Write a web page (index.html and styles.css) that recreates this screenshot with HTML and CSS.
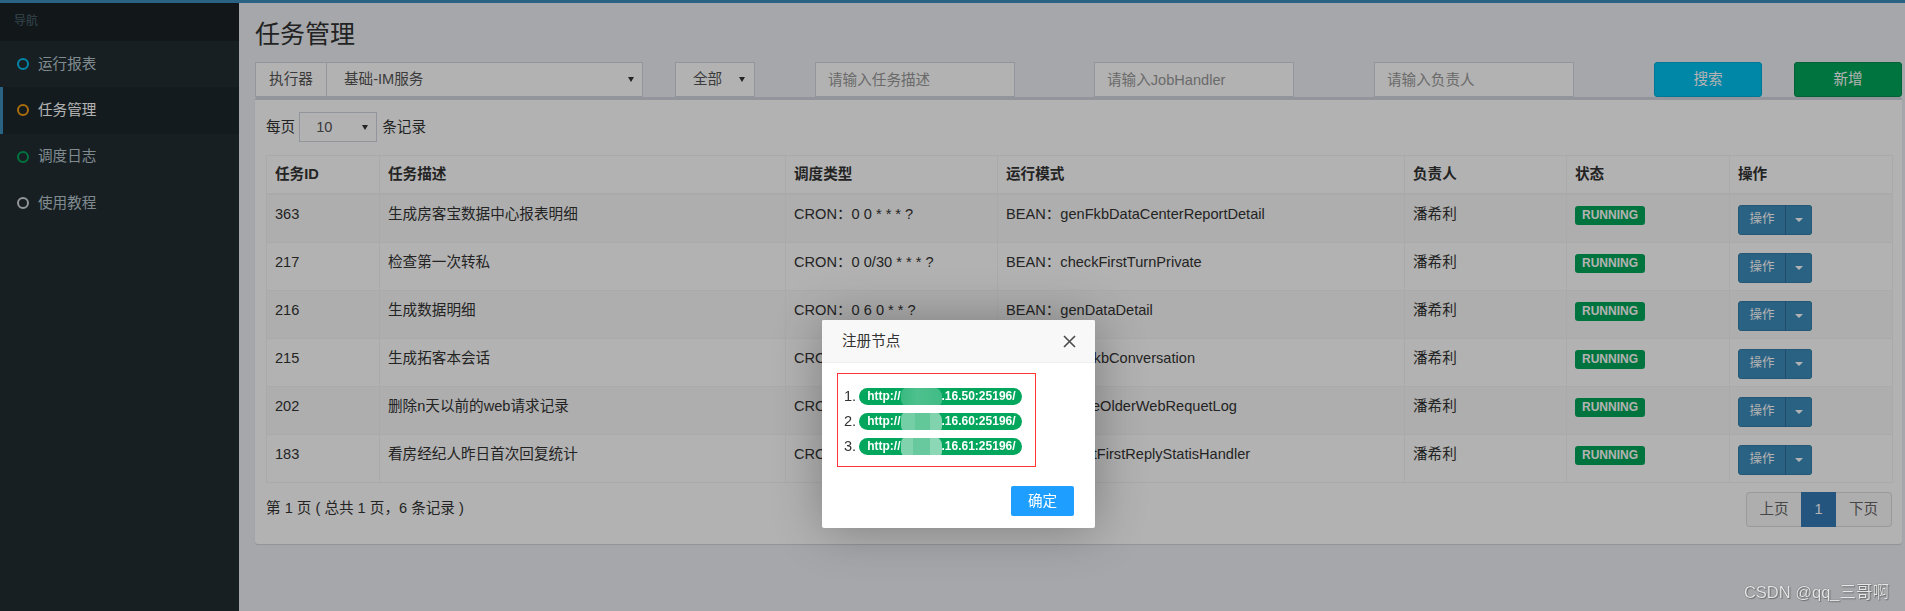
FILE: index.html
```html
<!DOCTYPE html>
<html lang="zh-CN">
<head>
<meta charset="utf-8">
<title>任务管理</title>
<link rel="stylesheet" href="styles.css">
</head>
<body>
<div class="topbar"></div>
<div class="layout">
  <aside class="sidebar">
    <div class="nav-header">导航</div>
    <ul class="menu">
      <li><span class="ring ring-aqua"></span>运行报表</li>
      <li class="active"><span class="ring ring-orange"></span>任务管理</li>
      <li><span class="ring ring-green"></span>调度日志</li>
      <li><span class="ring ring-gray"></span>使用教程</li>
    </ul>
  </aside>
  <main class="content">
    <h1 class="page-title">任务管理</h1>
    <div class="filters">
      <div class="fgroup">
        <span class="addon">执行器</span>
        <div class="select select-wide"><span>基础-IM服务</span><i class="caret-dn"></i></div>
      </div>
      <div class="select select-all"><span>全部</span><i class="caret-dn"></i></div>
      <input class="finput fi-1" type="text" placeholder="请输入任务描述">
      <input class="finput fi-2" type="text" placeholder="请输入JobHandler">
      <input class="finput fi-3" type="text" placeholder="请输入负责人">
      <button class="btn btn-search" type="button">搜索</button>
      <button class="btn btn-add" type="button">新增</button>
    </div>
    <section class="box">
      <div class="length">
        <span>每页</span>
        <div class="select len-select"><span>10</span><i class="caret-dn"></i></div>
        <span class="len-after">条记录</span>
      </div>
      <table class="grid">
        <colgroup>
          <col style="width:113px">
          <col style="width:406px">
          <col style="width:212px">
          <col style="width:407px">
          <col style="width:162px">
          <col style="width:163px">
          <col style="width:163px">
        </colgroup>
        <thead>
          <tr><th>任务ID</th><th>任务描述</th><th>调度类型</th><th>运行模式</th><th>负责人</th><th>状态</th><th>操作</th></tr>
        </thead>
        <tbody>
          <tr><td>363</td><td>生成房客宝数据中心报表明细</td><td>CRON：0 0 * * * ?</td><td>BEAN：genFkbDataCenterReportDetail</td><td>潘希利</td><td><span class="label">RUNNING</span></td><td><div class="btn-group"><span class="op-main">操作</span><span class="op-caret"><i></i></span></div></td></tr>
          <tr><td>217</td><td>检查第一次转私</td><td>CRON：0 0/30 * * * ?</td><td>BEAN：checkFirstTurnPrivate</td><td>潘希利</td><td><span class="label">RUNNING</span></td><td><div class="btn-group"><span class="op-main">操作</span><span class="op-caret"><i></i></span></div></td></tr>
          <tr><td>216</td><td>生成数据明细</td><td>CRON：0 6 0 * * ?</td><td>BEAN：genDataDetail</td><td>潘希利</td><td><span class="label">RUNNING</span></td><td><div class="btn-group"><span class="op-main">操作</span><span class="op-caret"><i></i></span></div></td></tr>
          <tr><td>215</td><td>生成拓客本会话</td><td>CRON：0 0 2 * * ?</td><td>BEAN：genTkbConversation</td><td>潘希利</td><td><span class="label">RUNNING</span></td><td><div class="btn-group"><span class="op-main">操作</span><span class="op-caret"><i></i></span></div></td></tr>
          <tr><td>202</td><td>删除n天以前的web请求记录</td><td>CRON：0 0 3 * * ?</td><td>BEAN：deleteOlderWebRequetLog</td><td>潘希利</td><td><span class="label">RUNNING</span></td><td><div class="btn-group"><span class="op-main">操作</span><span class="op-caret"><i></i></span></div></td></tr>
          <tr><td>183</td><td>看房经纪人昨日首次回复统计</td><td>CRON：0 0 1 * * ?</td><td>BEAN：agentFirstReplyStatisHandler</td><td>潘希利</td><td><span class="label">RUNNING</span></td><td><div class="btn-group"><span class="op-main">操作</span><span class="op-caret"><i></i></span></div></td></tr>
        </tbody>
      </table>
      <div class="table-foot">
        <div class="info">第 1 页 ( 总共 1 页，6 条记录 )</div>
        <div class="pager">
          <a class="pg pg-first">上页</a>
          <a class="pg pg-active">1</a>
          <a class="pg pg-last">下页</a>
        </div>
      </div>
    </section>
  </main>
</div>

<div class="shade"></div>

<div class="modal">
  <div class="modal-head">
    <span>注册节点</span>
    <svg class="modal-close" width="13" height="13" viewBox="0 0 13 13"><path d="M1 1 L12 12 M12 1 L1 12" stroke="#4a4a4a" stroke-width="1.6" fill="none"/></svg>
  </div>
  <div class="modal-body">
    <div class="nodes">
      <div class="node"><span class="node-no">1.</span><span class="pill">http://<span class="mosaic m1"></span>.16.50:25196/</span></div>
      <div class="node"><span class="node-no">2.</span><span class="pill">http://<span class="mosaic m2"></span>.16.60:25196/</span></div>
      <div class="node"><span class="node-no">3.</span><span class="pill">http://<span class="mosaic m3"></span>.16.61:25196/</span></div>
    </div>
  </div>
  <div class="modal-foot"><button class="btn-ok" type="button">确定</button></div>
</div>

<div class="watermark">CSDN @qq_三哥啊</div>
</body>
</html>
```

FILE: styles.css
```css
* { box-sizing: border-box; }
html, body { margin: 0; height: 100%; }
body {
  font-family: "Liberation Sans", "Noto Sans CJK SC", sans-serif;
  font-size: 14.6px;
  line-height: 1.42857;
  color: #333;
  background: #ecf0f5;
  overflow: hidden;
  position: relative;
}

.topbar { height: 3px; background: #3c8dbc; }
.layout { display: flex; height: 608px; }

/* sidebar */
.sidebar { width: 239px; flex: none; background: #222d32; }
.nav-header {
  height: 38px; background: #1a2226; color: #4b646f;
  font-size: 12px; padding-left: 14px;
  display: flex; align-items: center;
}
.menu { list-style: none; margin: 0; padding: 0; }
.menu li {
  height: 46.33px; display: flex; align-items: center;
  padding-left: 14px; border-left: 3px solid transparent;
  color: #b8c7ce;
}
.menu li.active { background: #1e282c; border-left-color: #3c8dbc; color: #fff; }
.ring { width: 12px; height: 12px; border: 2.3px solid; border-radius: 50%; margin-right: 9px; flex: none; }
.ring-aqua { border-color: #00c0ef; }
.ring-orange { border-color: #f39c12; }
.ring-green { border-color: #00a65a; }
.ring-gray { border-color: #d2d6de; }

/* content */
.content { flex: 1; min-width: 0; padding: 16px 3px 0 16px; }
.page-title { font-size: 25px; font-weight: 400; line-height: 30px; margin: 0 0 13px; color: #333; }

.filters { display: flex; height: 35px; }
.fgroup { width: 388px; display: flex; flex: none; }
.addon {
  width: 72px; flex: none; border: 1px solid #d2d6de; background: #fff; color: #555;
  display: flex; align-items: center; justify-content: center;
}
.select {
  border: 1px solid #d2d6de; background: #fff; color: #555;
  display: flex; align-items: center; justify-content: space-between;
  padding: 0 8px 0 17px;
}
.select-wide { flex: 1; border-left: 0; }
.select-all { width: 80px; margin-left: 32px; flex: none; padding-right: 9px; }
.caret-dn {
  width: 0; height: 0;
  border-left: 3px solid transparent; border-right: 3px solid transparent;
  border-top: 5px solid #333;
}
.finput {
  width: 200px; flex: none; height: 35px; border: 1px solid #d2d6de; background: #fff;
  padding: 0 12px; font: inherit; color: #555; outline: none; border-radius: 0;
}
.finput::placeholder { color: #999; }
.fi-1 { margin-left: 60px; }
.fi-2 { margin-left: 79px; }
.fi-3 { margin-left: 80px; }
.btn {
  width: 108px; flex: none; height: 35px; border-radius: 3px; color: #fff;
  font: inherit; border: 1px solid; padding: 0;
}
.btn-search { margin-left: 80px; background: #00c0ef; border-color: #00acd6; }
.btn-add { margin-left: 32px; background: #00a65a; border-color: #008d4c; }

/* box */
.box {
  background: #fff; border-top: 3px solid #d2d6de; border-radius: 3px;
  box-shadow: 0 1px 1px rgba(0,0,0,.12);
  padding: 10px 10px 10px 11px;
}
.length { display: flex; align-items: center; height: 34px; }
.len-select { width: 78px; height: 30px; margin-left: 4px; padding-left: 16px; }
.len-after { margin-left: 5px; }

.grid { width: 100%; border-collapse: collapse; table-layout: fixed; margin-top: 11px; }
.grid th, .grid td {
  border: 1px solid #f4f4f4; text-align: left; vertical-align: top;
  white-space: nowrap; overflow: hidden;
}
.grid th { padding: 8px; }
.grid td { padding: 9px 8px 7px; }
.grid thead th { border-bottom-width: 2px; font-weight: 700; }
.grid tbody tr { height: 48px; }
.grid tbody tr:nth-child(odd) { background: #f9f9f9; }

.label {
  display: inline-block; margin-top: 1px;
  font-size: 12px; font-weight: 700; line-height: 19px; padding: 0 7px;
  background: #00a65a; color: #fff; border-radius: 3px;
}
.btn-group { display: flex; height: 30px; margin-top: 1px; width: 75px; }
.op-main {
  width: 48px; background: #3c8dbc; border: 1px solid #367fa9; color: #fff;
  border-radius: 3px 0 0 3px; font-size: 12.5px;
  display: flex; align-items: center; justify-content: center;
}
.op-caret {
  width: 27px; background: #3c8dbc; border: 1px solid #367fa9; border-left: 1px solid #2e6d92;
  border-radius: 0 3px 3px 0; margin-left: -1px;
  display: flex; align-items: center; justify-content: center;
}
.op-caret i {
  width: 0; height: 0;
  border-left: 4px solid transparent; border-right: 4px solid transparent;
  border-top: 4px solid #fff;
}

.table-foot { display: flex; justify-content: space-between; align-items: flex-start; margin-top: 9px; margin-bottom: 7px; }
.info { padding-top: 6px; }
.pager { display: flex; }
.pg {
  height: 35px; padding: 0; border: 1px solid #ddd; background: #fafafa; color: #666;
  display: flex; align-items: center; justify-content: center;
}
.pg-first { width: 55px; border-radius: 4px 0 0 4px; border-right: 0; }
.pg-active { width: 35px; background: #337ab7; border-color: #337ab7; color: #fff; }
.pg-last { width: 56px; border-radius: 0 4px 4px 0; border-left: 0; }

/* overlay + dialog */
.shade { position: fixed; inset: 0; background: rgba(0,0,0,.3); }
.modal {
  position: absolute; left: 822px; top: 320px; width: 273px; height: 208px;
  background: #fff; border-radius: 2px; box-shadow: 1px 1px 50px rgba(0,0,0,.3);
  display: flex; flex-direction: column;
}
.modal-head {
  height: 43px; background: #f8f8f8; border-bottom: 1px solid #eee;
  padding: 0 19px 0 20px; display: flex; align-items: center; justify-content: space-between;
  color: #333; border-radius: 2px 2px 0 0;
}
.modal-close { display: block; }
.modal-body { padding: 10px 0 0 15px; }
.nodes { width: 199px; border: 1px solid #f33; padding: 10px 0 7px 6px; }
.node { height: 25px; display: flex; align-items: center; gap: 3px; }
.node-no { color: #333; }
.pill {
  display: inline-flex; align-items: center; height: 17px; border-radius: 9px;
  padding: 0 6px 0 8px; background: #02a65d; color: #fff;
  font-size: 12px; font-weight: 700; line-height: 17px;
}
.mosaic {
  display: inline-block; width: 41px; height: 19px; border-radius: 7px 9px 5px 6px;
  filter: blur(0.7px);
}
.m1 {
  background:
    linear-gradient(90deg, rgba(255,255,255,.22), rgba(255,255,255,.3) 40%, rgba(255,255,255,.25));
}
.m2 {
  height: 21px;
  background:
    linear-gradient(90deg, rgba(255,255,255,.45) 0 35%, rgba(255,255,255,.38) 35% 70%, rgba(255,255,255,.5) 70%);
}
.m3 {
  height: 21px;
  background:
    linear-gradient(90deg, rgba(255,255,255,.5) 0 30%, rgba(255,255,255,.4) 30% 70%, rgba(255,255,255,.55) 70%);
}
.modal-foot { margin-top: auto; padding: 0 21px 12px; display: flex; justify-content: flex-end; }
.btn-ok {
  width: 63px; height: 30px; background: #1e9fff; color: #fff; border: 0;
  border-radius: 2px; font: inherit; padding: 0;
}

.watermark {
  position: absolute; right: 16px; top: 581px;
  font-size: 16.5px; color: #e6e6e6;
  text-shadow: 0 0 1px rgba(0,0,0,.6), 1px 1px 1px rgba(0,0,0,.3);
}
```
